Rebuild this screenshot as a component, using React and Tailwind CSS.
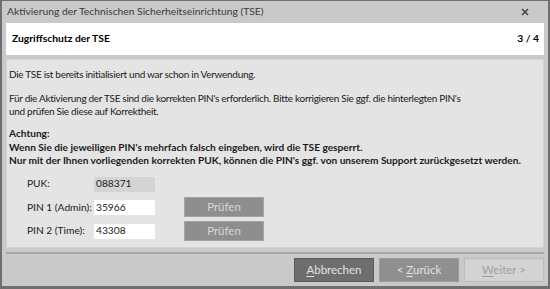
export default function App() {
  const font = { fontFamily: 'Lato, "Open Sans", sans-serif' };
  return (
    <div className="w-[550px] h-[289px] bg-[#c9c9c9] border-x-2 border-t border-b-[3px] border-[#6f6f6f] flex flex-col text-[#1a1a1a] overflow-hidden whitespace-nowrap" style={font}>
      <div className="h-[22px] flex items-center justify-between pl-[5px] pr-[19px] text-[10.3px] text-[#3a3a3a]">
        <span>Aktivierung der Technischen Sicherheitseinrichtung (TSE)</span>
        <svg width="8" height="8" viewBox="0 0 8 8"><path d="M1 1L7 7M7 1L1 7" stroke="#444" strokeWidth="1.5" /></svg>
      </div>
      <div className="mx-[4px] h-[32px] bg-white flex items-center justify-between pl-[6px] pr-[5px] text-[10.3px] font-bold text-black">
        <span>Zugriffschutz der TSE</span>
        <span>3 / 4</span>
      </div>
      <div className="mx-[4px] mt-[4px] h-[189px] bg-[#e4e4e4] border border-[#d4d4d4] px-[2px] pt-[8px] text-[10.2px] leading-[13.5px]">
        <p className="text-[10px] tracking-[-0.3px]">Die TSE ist bereits initialisiert und war schon in Verwendung.</p>
        <p className="mt-[10px] text-[10px] tracking-[-0.3px]">Für die Aktivierung der TSE sind die korrekten PIN's erforderlich. Bitte korrigieren Sie ggf. die hinterlegten PIN's<br />und prüfen Sie diese auf Korrektheit.</p>
        <div className="mt-[8.5px] font-bold text-[10.15px]">
          <p>Achtung:</p>
          <p>Wenn Sie die jeweiligen PIN's mehrfach falsch eingeben, wird die TSE gesperrt.</p>
          <p>Nur mit der Ihnen vorliegenden korrekten PUK, können die PIN's ggf. von unserem Support zurückgesetzt werden.</p>
        </div>
        <div className="mt-[9px] pl-[18px] grid grid-cols-[67px_61px_29px_80px] grid-rows-[15px_15px_15px] gap-y-[8.5px] items-center">
          <span>PUK:</span>
          <div className="h-[15px] bg-[#d4d4d4] pl-[2px] flex items-center">088371</div>
          <span></span>
          <span></span>
          <span>PIN 1 (Admin):</span>
          <div className="h-[15px] bg-white pl-[2px] flex items-center">35966</div>
          <span></span>
          <div className="h-[20px] bg-[#8e8e8e] border border-[#a3a3a3] text-[#d8d8d8] text-[11.5px] flex items-center justify-center -mt-[1px]">Prüfen</div>
          <span>PIN 2 (Time):</span>
          <div className="h-[15px] bg-white pl-[2px] flex items-center">43308</div>
          <span></span>
          <div className="h-[20px] bg-[#8e8e8e] border border-[#a3a3a3] text-[#d8d8d8] text-[11.5px] flex items-center justify-center -mt-[1px]">Prüfen</div>
        </div>
      </div>
      <div className="mx-[4px] mt-[4px] h-[2px] bg-[#a8a8a8]"></div>
      <div className="flex justify-end gap-[5px] pr-[4px] mt-[4px] text-[11.5px]">
        <div className="w-[80px] h-[24px] bg-[#6e6e6e] border border-[#5a5a5a] text-[#e2e2e2] flex items-center justify-center"><span><u className="underline-offset-2">A</u>bbrechen</span></div>
        <div className="w-[80px] h-[24px] bg-[#8f8f8f] border border-[#9c9c9c] text-[#e2e2e2] flex items-center justify-center"><span>&lt; <u className="underline-offset-2">Z</u>urück</span></div>
        <div className="w-[80px] h-[24px] bg-[#d3d3d3] border border-[#bcbcbc] text-[#9e9e9e] flex items-center justify-center"><span><u className="underline-offset-2">W</u>eiter &gt;</span></div>
      </div>
    </div>
  );
}
